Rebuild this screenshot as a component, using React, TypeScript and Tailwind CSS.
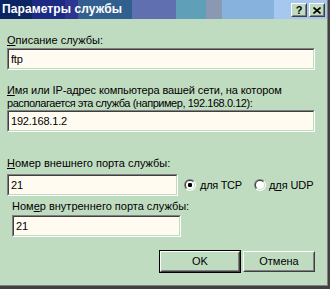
import React from "react";

const FONT = { fontFamily: '"Liberation Sans", Arial, sans-serif' };

function Sunken({ w, children }: { w: string; children?: React.ReactNode }) {
  return (
    <div className={`${w} h-[22px] border border-[#808080] border-b-white border-r-white`}>
      <div className="h-full border border-[#404040] border-b-[#c0dcc0] border-r-[#c0dcc0] bg-[#fffbf0] flex items-center pl-[2px] text-[11px] leading-[13px] text-black tracking-[-0.2px]">
        {children}
      </div>
    </div>
  );
}

function Radio({ checked, id }: { checked?: boolean; id: string }) {
  return (
    <svg width="12" height="12" viewBox="0 0 12 12" className="shrink-0">
      <defs>
        <linearGradient id={`o${id}`} x1="0" y1="0" x2="1" y2="1">
          <stop offset="0.5" stopColor="#808080" />
          <stop offset="0.5" stopColor="#ffffff" />
        </linearGradient>
        <linearGradient id={`i${id}`} x1="0" y1="0" x2="1" y2="1">
          <stop offset="0.5" stopColor="#404040" />
          <stop offset="0.5" stopColor="#c0dcc0" />
        </linearGradient>
      </defs>
      <circle cx="6" cy="6" r="6" fill={`url(#o${id})`} />
      <circle cx="6" cy="6" r="5" fill={`url(#i${id})`} />
      <circle cx="6" cy="6" r="4" fill="#ffffff" />
      {checked && <rect x="4" y="4" width="4" height="4" rx="1.2" fill="#000" />}
    </svg>
  );
}

function TitleBtn({ children }: { children: React.ReactNode }) {
  return (
    <div className="w-[16px] h-[14px] border border-white border-b-[#404040] border-r-[#404040]">
      <div className="h-full border border-[#c0dcc0] border-b-[#808080] border-r-[#808080] bg-[#c0dcc0] flex items-center justify-center">
        {children}
      </div>
    </div>
  );
}

function Btn({ w, def, children }: { w: string; def?: boolean; children: React.ReactNode }) {
  const inner = (
    <div className="h-full border border-white border-b-[#404040] border-r-[#404040]">
      <div className="h-full border border-[#c0dcc0] border-b-[#808080] border-r-[#808080] bg-[#c0dcc0] flex items-center justify-center text-[11px] text-black">
        {children}
      </div>
    </div>
  );
  return (
    <div className={`${w} h-[23px] ${def ? "border border-black" : "p-px"}`}>
      {inner}
    </div>
  );
}

export default function App() {
  return (
    <div style={FONT} className="w-[330px] h-[289px] bg-[#404040] pr-[2px] pb-[3px]">
      <div className="h-full bg-[#808080] pr-px pb-px">
        <div className="h-full bg-[#c0dcc0] flex flex-col">
          <div className="h-[19px] shrink-0 flex items-start justify-between pl-[2px] pr-[2px] bg-[linear-gradient(to_right,#0b2463_0px,#0b2463_32px,#1c2a84_32px,#1c2a84_65px,#2e3590_65px,#2e3590_78px,#315f8f_78px,#315f8f_132px,#5f6fb0_132px,#5f6fb0_176px,#5f9fb8_176px,#5f9fb8_206px,#8a98b2_206px,#8a98b2_222px,#88b2de_222px,#88b2de_274px,#a6c8f0_274px,#a6c8f0_100%)]">
            <div className="text-white font-bold text-[12px] leading-[19px] whitespace-nowrap tracking-[0.1px]">Параметры службы</div>
            <div className="flex gap-[2px] pt-[3px]">
              <TitleBtn>
                <span className="text-[11px] font-bold leading-none text-black">?</span>
              </TitleBtn>
              <TitleBtn>
                <svg width="8" height="7" viewBox="0 0 8 7">
                  <path d="M0.5 0.5 L7.5 6.5 M7.5 0.5 L0.5 6.5" stroke="#000" strokeWidth="1.6" />
                </svg>
              </TitleBtn>
            </div>
          </div>

          <div className="flex flex-col px-[7px] text-[11px] leading-[13px] text-black">
            <div className="mt-[15px] h-[13px]">
              <u>О</u>писание службы:
            </div>
            <div className="mt-px">
              <Sunken w="w-[308px]">ftp</Sunken>
            </div>
            <div className="mt-[14px] whitespace-nowrap">
              <div className="h-[13px] tracking-[-0.1px]"><u>И</u>мя или IP-адрес компьютера вашей сети, на котором</div>
              <div className="h-[13px] tracking-[-0.45px]">располагается эта служба (например, 192.168.0.12):</div>
            </div>
            <div>
              <Sunken w="w-[308px]">192.168.1.2</Sunken>
            </div>
            <div className="mt-[25px] h-[13px]">
              <u>Н</u>омер внешнего порта службы:
            </div>
            <div className="mt-[4px] flex items-center">
              <Sunken w="w-[171px]">21</Sunken>
              <div className="ml-[6px] w-[70px] flex items-center gap-[4px]">
                <Radio checked id="a" />
                <span className="tracking-[-0.3px]"><u>д</u>ля TCP</span>
              </div>
              <div className="flex items-center gap-[3px]">
                <Radio id="b" />
                <span className="tracking-[-0.1px]">д<u>л</u>я UDP</span>
              </div>
            </div>
            <div className="ml-[5px] mt-[4px] h-[13px]">
              Ном<u>е</u>р внутреннего порта службы:
            </div>
            <div className="ml-[5px] mt-[2px]">
              <Sunken w="w-[169px]">21</Sunken>
            </div>
            <div className="mt-[13px] ml-[152px] flex gap-px">
              <Btn w="w-[82px]" def>OK</Btn>
              <Btn w="w-[74px]">Отмена</Btn>
            </div>
          </div>
        </div>
      </div>
    </div>
  );
}
